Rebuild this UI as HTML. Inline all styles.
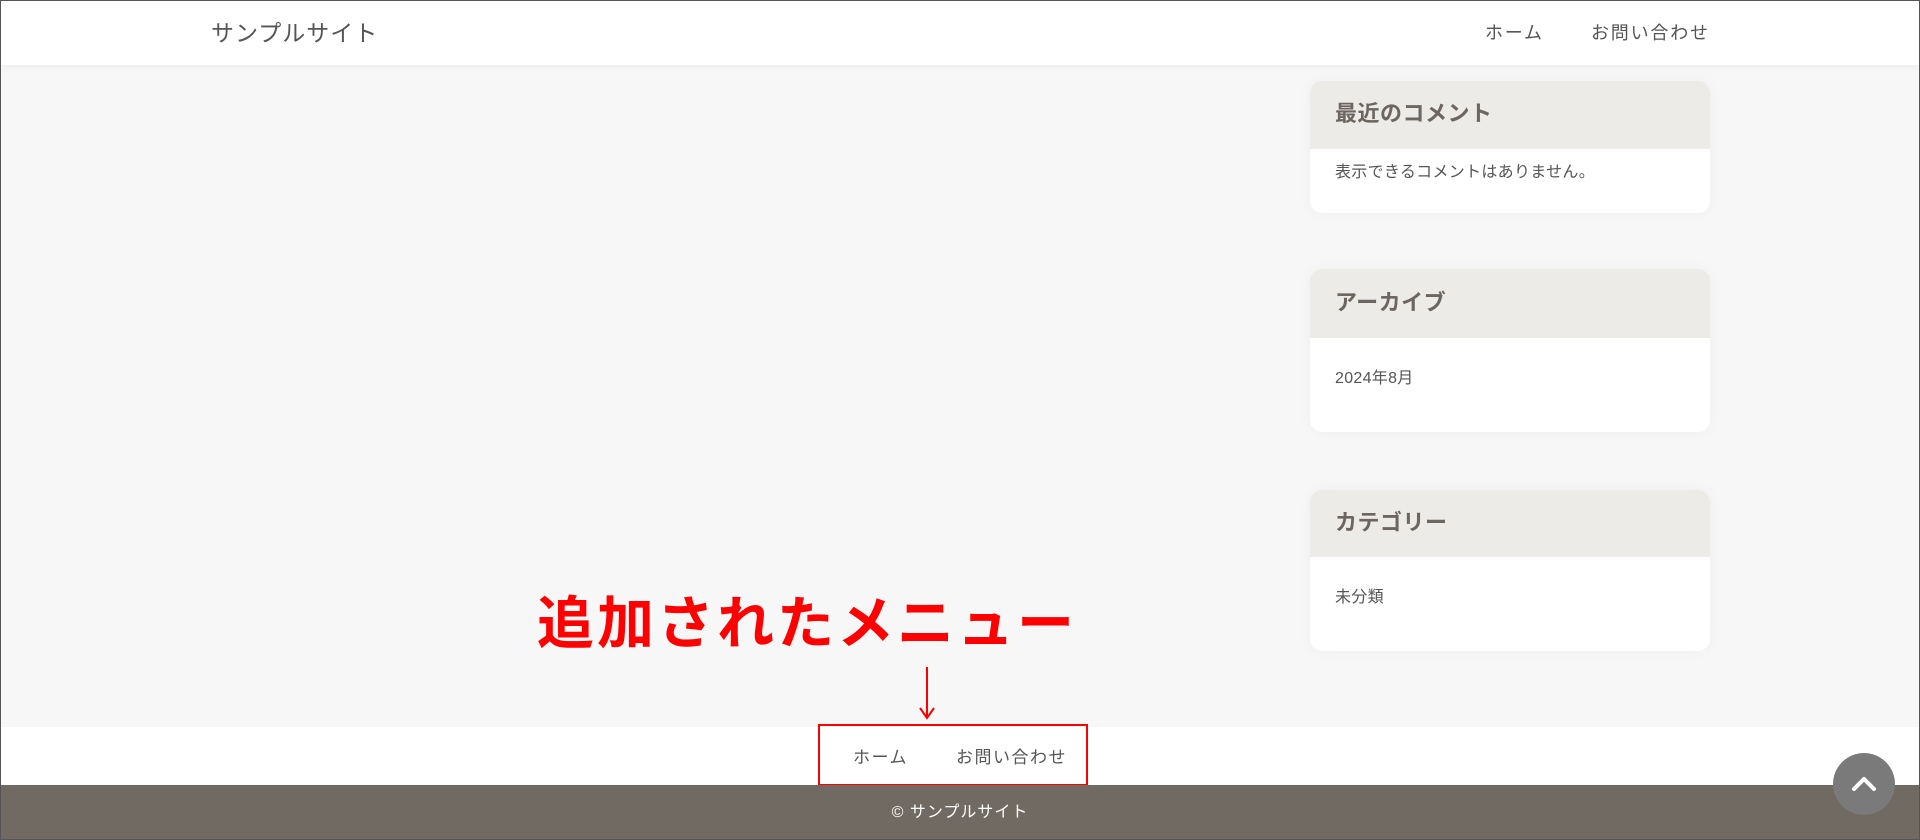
<!DOCTYPE html>
<html><head><meta charset="utf-8"><style>
*{margin:0;padding:0;box-sizing:border-box}
body{width:1920px;height:840px;overflow:hidden;background:#f7f7f7;font-family:"Liberation Sans","Noto Sans CJK JP",sans-serif;color:#555;position:relative}
.frame{position:absolute;inset:0;border:1px solid #555;pointer-events:none;z-index:10}
header{position:absolute;left:0;top:0;width:1920px;height:65px;background:#fff;box-shadow:0 2px 8px rgba(0,0,0,.05)}
.brand{position:absolute;left:211px;top:14px;font-size:23px;color:#555;letter-spacing:1px}
.nav{position:absolute;top:19px;font-size:18px;color:#555;letter-spacing:1.8px}
.card{position:absolute;left:1310px;width:400px;background:#fff;border-radius:12px;overflow:hidden;box-shadow:0 0 14px rgba(0,0,0,.04)}
.card h3{background:#ecebe8;color:#6d6660;font-size:22px;font-weight:bold;padding-left:25px;letter-spacing:0.5px}
.card p{padding-left:25px;font-size:16px;color:#555;letter-spacing:0.3px}
.fnav{position:absolute;left:0;top:727px;width:1920px;height:58px;background:#fff}
.foot{position:absolute;left:0;top:785px;width:1920px;height:55px;background:#716a63;color:#fff;text-align:center;font-size:16px;line-height:55px;letter-spacing:1px}
.red{position:absolute;left:537px;top:590px;font-size:57px;font-weight:bold;color:#f00;letter-spacing:3px;line-height:68px}
.box{position:absolute;left:818px;top:724px;width:270px;height:62px;border:2px solid #f00}
.fm{position:absolute;top:743px;font-size:17px;color:#555;letter-spacing:1.5px}
.top{position:absolute;left:1833px;top:753px;width:62px;height:62px;border-radius:50%;background:#7a7a7a}
</style></head><body>
<header>
<div class="brand">サンプルサイト</div>
<div class="nav" style="left:1485px">ホーム</div>
<div class="nav" style="left:1591px">お問い合わせ</div>
</header>
<div class="card" style="top:81px;height:132px"><h3 style="height:68px;line-height:66px">最近のコメント</h3><p style="padding-top:9px">表示できるコメントはありません。</p></div>
<div class="card" style="top:269px;height:163px"><h3 style="height:69px;line-height:68px">アーカイブ</h3><p style="padding-top:26px">2024年8月</p></div>
<div class="card" style="top:490px;height:161px"><h3 style="height:67px;line-height:66px">カテゴリー</h3><p style="padding-top:26px">未分類</p></div>
<div class="red">追加されたメニュー</div>
<svg style="position:absolute;left:917px;top:665px" width="20" height="56"><path d="M10 2V53M3 43L10 53L17 43" stroke="#f00" stroke-width="2" fill="none"/></svg>
<div class="fnav"></div>
<div class="box"></div>
<div class="fm" style="left:853px">ホーム</div>
<div class="fm" style="left:956px">お問い合わせ</div>
<div class="foot">© サンプルサイト</div>
<div class="top"><svg width="62" height="62"><path d="M21 36L31 26L41 36" stroke="#fff" stroke-width="4" fill="none" stroke-linecap="round" stroke-linejoin="round"/></svg></div>
<div class="frame"></div>
</body></html>
